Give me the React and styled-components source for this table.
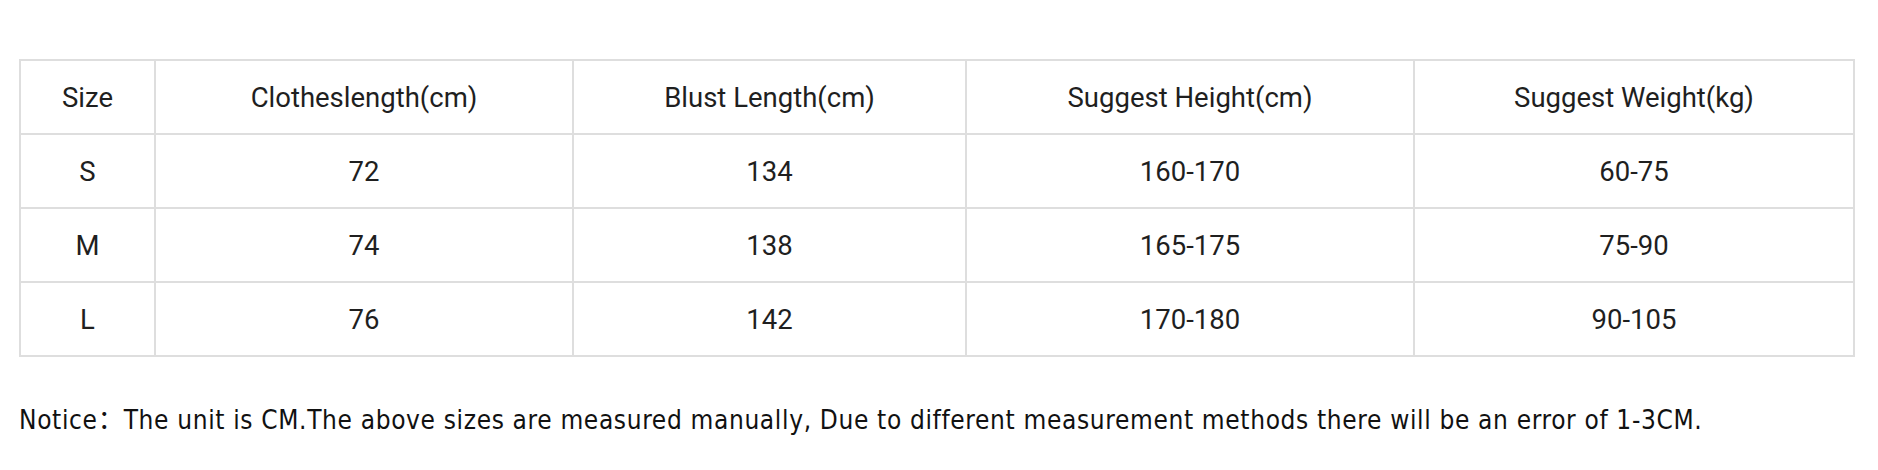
import React from 'react';
import styled, { createGlobalStyle } from 'styled-components';

const GlobalStyle = createGlobalStyle`
  body {
    margin: 0;
    background: #fff;
  }
`;

const Page = styled.div`
  box-sizing: border-box;
  width: 1878px;
  height: 470px;
  padding: 59px 0 0 19px;
  background: #fff;
`;

const Table = styled.table`
  border-collapse: collapse;
  table-layout: fixed;
  width: 1834px;
  font-family: Roboto, 'Liberation Sans', sans-serif;
  font-size: 27.5px;
  color: #1f1f1f;
`;

const Cell = styled.td`
  border: 2px solid #dedede;
  height: 72px;
  padding: 0;
  text-align: center;
  vertical-align: middle;
  font-weight: 400;
`;

const Notice = styled.p`
  margin: 42px 0 0;
  font-family: 'DejaVu Sans Condensed', 'DejaVu Sans', 'Noto Sans CJK SC', sans-serif;
  font-size: 26px;
  letter-spacing: 0.65px;
  color: #111;
  white-space: nowrap;
`;

const Colon = styled.span`
  font-family: 'Noto Sans CJK SC', sans-serif;
  letter-spacing: 0;
`;

const widths = [135, 418, 393, 448, 440];

const header = ['Size', 'Clotheslength(cm)', 'Blust Length(cm)', 'Suggest Height(cm)', 'Suggest Weight(kg)'];

const rows = [
  ['S', '72', '134', '160-170', '60-75'],
  ['M', '74', '138', '165-175', '75-90'],
  ['L', '76', '142', '170-180', '90-105'],
];

export default function App() {
  return (
    <>
      <GlobalStyle />
      <Page>
        <Table>
          <colgroup>
            {widths.map((w, i) => (
              <col key={i} style={{ width: w }} />
            ))}
          </colgroup>
          <tbody>
            <tr>
              {header.map((h) => (
                <Cell key={h}>{h}</Cell>
              ))}
            </tr>
            {rows.map((r) => (
              <tr key={r[0]}>
                {r.map((c, i) => (
                  <Cell key={i}>{c}</Cell>
                ))}
              </tr>
            ))}
          </tbody>
        </Table>
        <Notice>
          Notice<Colon>：</Colon>The unit is CM.The above sizes are measured manually, Due to different measurement methods there will be an error of 1-3CM.
        </Notice>
      </Page>
    </>
  );
}
